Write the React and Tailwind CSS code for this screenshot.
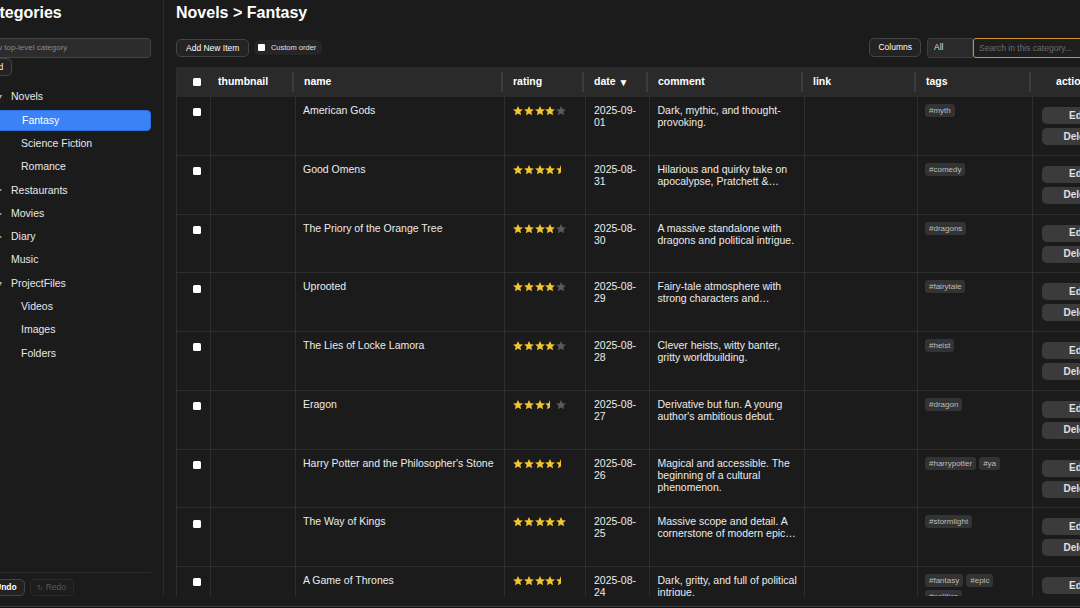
import React from "react";

const P = "M12 2l2.94 6.26 6.86.74-5.13 4.62 1.45 6.76L12 16.9l-6.12 3.48 1.45-6.76L2.2 9l6.86-.74z";

function Star({ type }) {
  return (
    <svg width="10" height="10" viewBox="2 2 20 20" className="mr-[0.8px] shrink-0">
      {type === "full" && <path d={P} fill="#f4c430" />}
      {type === "empty" && <path d={P} fill="#5a5a5a" />}
      {type === "half" && (
        <svg x="0" y="0" width="12" height="24">
          <path d={P} fill="#f4c430" />
        </svg>
      )}
    </svg>
  );
}

function Stars({ value }) {
  const items = [];
  for (let i = 1; i <= 5; i++) {
    if (value >= i) items.push("full");
    else if (value >= i - 0.5) items.push("half");
    else items.push("empty");
  }
  return (
    <div className="flex">
      {items.map((t, i) => (
        <Star key={i} type={t} />
      ))}
    </div>
  );
}

const rows = [
  { name: "American Gods", rating: 4, date: "2025-09-01", comment: "Dark, mythic, and thought-provoking.", tags: ["#myth"] },
  { name: "Good Omens", rating: 4.5, date: "2025-08-31", comment: "Hilarious and quirky take on apocalypse, Pratchett &…", tags: ["#comedy"] },
  { name: "The Priory of the Orange Tree", rating: 4, date: "2025-08-30", comment: "A massive standalone with dragons and political intrigue.", tags: ["#dragons"] },
  { name: "Uprooted", rating: 4, date: "2025-08-29", comment: "Fairy-tale atmosphere with strong characters and…", tags: ["#fairytale"] },
  { name: "The Lies of Locke Lamora", rating: 4, date: "2025-08-28", comment: "Clever heists, witty banter, gritty worldbuilding.", tags: ["#heist"] },
  { name: "Eragon", rating: 3.5, date: "2025-08-27", comment: "Derivative but fun. A young author's ambitious debut.", tags: ["#dragon"] },
  { name: "Harry Potter and the Philosopher's Stone", rating: 4.5, date: "2025-08-26", comment: "Magical and accessible. The beginning of a cultural phenomenon.", tags: ["#harrypotter", "#ya"] },
  { name: "The Way of Kings", rating: 5, date: "2025-08-25", comment: "Massive scope and detail. A cornerstone of modern epic…", tags: ["#stormlight"] },
  { name: "A Game of Thrones", rating: 4.5, date: "2025-08-24", comment: "Dark, gritty, and full of political intrigue.", tags: ["#fantasy", "#epic", "#politics"] },
];

const tree = [
  { label: "Novels", arrow: "▾", depth: 0 },
  { label: "Fantasy", depth: 1, selected: true },
  { label: "Science Fiction", depth: 1 },
  { label: "Romance", depth: 1 },
  { label: "Restaurants", arrow: "▸", depth: 0 },
  { label: "Movies", arrow: "▸", depth: 0 },
  { label: "Diary", arrow: "▸", depth: 0 },
  { label: "Music", depth: 0 },
  { label: "ProjectFiles", arrow: "▾", depth: 0 },
  { label: "Videos", depth: 1 },
  { label: "Images", depth: 1 },
  { label: "Folders", depth: 1 },
];

function Sep() {
  return <span className="absolute right-[2.5px] top-[5px] h-[20px] w-[1.5px] bg-[#3d3d3d]" />;
}

function Box() {
  return <span className="block w-[8px] h-[8px] bg-white rounded-[1.5px]" />;
}

export default function App() {
  return (
    <div className="w-[1080px] h-[608px] overflow-hidden bg-[#1b1b1b] text-[#e8e8e8] font-['Liberation_Sans',Arial,sans-serif] flex flex-col">
      <div className="flex h-[596px] shrink-0">
        <aside className="w-[197px] -ml-[33px] shrink-0 h-full border-r border-[#2c2c2c] px-[12px] pt-[3px] flex flex-col">
          <h1 className="text-[16px] leading-[20px] font-bold text-white whitespace-nowrap">Categories</h1>
          <input
            placeholder="New top-level category"
            className="mt-[14.5px] h-[20px] w-full shrink-0 rounded-[4px] border border-[#444] bg-[#2c2c2c] pl-[6px] text-[8px] text-white placeholder:text-[#8a8a8a] outline-none"
          />
          <button className="self-start mt-[0.6px] h-[17.7px] px-[8px] rounded-[5px] border border-[#444] bg-[#222] text-[8.5px] font-medium text-white leading-none">
            Add
          </button>
          <nav className="mt-[10.75px] flex-1 min-h-0 flex flex-col gap-[1.8px]">
            {tree.map((t) => (
              <div
                key={t.label}
                className={
                  "flex items-center h-[21.5px] shrink-0 rounded-[4px] text-[10.5px] " +
                  (t.depth === 1 ? "pl-[25px] " : "pl-[15px] ") +
                  (t.selected ? "bg-[#3b82f6] border border-[#2a6fdc] text-white" : "text-[#e8e8e8]")
                }
              >
                <span className="w-[12px] shrink-0 text-center text-[8px] text-[#aaa]">{t.arrow || ""}</span>
                <span className="ml-[5px] whitespace-nowrap">{t.label}</span>
              </div>
            ))}
          </nav>
          <div className="border-t border-[#2c2c2c] pt-[5.5px] flex gap-[5px] shrink-0">
            <button className="h-[17.5px] pl-[5px] pr-[7px] rounded-[5px] border border-[#444] bg-[#222] text-[8.5px] font-semibold text-white flex items-center gap-[3px] leading-none">
              <span className="text-[8px]">↺</span>Undo
            </button>
            <button className="h-[17.5px] pl-[6px] pr-[7px] rounded-[5px] border border-[#2a2a2a] bg-[#1d1d1d] text-[8.5px] text-[#585858] flex items-center gap-[3px] leading-none">
              <span className="text-[7px]">↻</span>Redo
            </button>
          </div>
        </aside>

        <main className="flex-1 min-w-0 overflow-hidden pl-[12px] pt-[3px]">
          <div className="w-[949px] h-full flex flex-col">
            <h2 className="text-[16px] leading-[20px] font-bold text-white whitespace-nowrap">Novels &gt; Fantasy</h2>
            <div className="mt-[14.5px] h-[20.5px] flex items-center justify-between shrink-0">
              <div className="flex items-center gap-[5px]">
                <button className="h-[18.5px] px-[9px] rounded-[5px] border border-[#444] bg-[#232323] text-[8.5px] font-medium text-white leading-none">
                  Add New Item
                </button>
                <div className="h-[14.7px] pl-[3.5px] pr-[6px] rounded-[6px] bg-[#262626] flex items-center gap-[6px]">
                  <span className="block w-[7px] h-[7px] bg-white rounded-[1px]" />
                  <span className="text-[7.5px] text-[#e0e0e0] leading-none">Custom order</span>
                </div>
              </div>
              <div className="flex items-center">
                <button className="h-[18.5px] px-[8px] rounded-[5px] border border-[#444] bg-[#232323] text-[8.5px] font-medium text-white leading-none mr-[6px]">
                  Columns
                </button>
                <div className="h-[20.3px] w-[46px] rounded-l-[3px] border border-[#3c3c3c] bg-[#2a2a2a] pl-[6px] flex items-center text-[8.5px] text-[#ddd]">
                  All
                </div>
                <input
                  placeholder="Search in this category..."
                  className="h-[20.3px] w-[152px] rounded-[3px] border-[1.5px] border-[#c9962a] bg-[#1e1e1e] pl-[5px] text-[8.5px] text-white placeholder:text-[#6b6b6b] outline-none"
                />
              </div>
            </div>

            <div className="mt-[9px] flex-1 min-h-0 overflow-hidden border-l border-[#2e2e2e]">
              <div className="flex h-[30px] bg-[#2a2a2a] text-[10.5px] font-bold text-white">
                <div className="w-[34px] shrink-0 pl-[16px] flex items-center"><Box /></div>
                <div className="w-[85px] shrink-0 relative px-[7px] flex items-center">thumbnail<Sep /></div>
                <div className="w-[209px] shrink-0 relative px-[8px] flex items-center">name<Sep /></div>
                <div className="w-[81px] shrink-0 relative px-[8px] flex items-center">rating<Sep /></div>
                <div className="w-[64px] shrink-0 relative px-[8px] flex items-center whitespace-nowrap">date <span className="ml-[3px] text-[10px]">▼</span><Sep /></div>
                <div className="w-[155px] shrink-0 relative px-[8px] flex items-center">comment<Sep /></div>
                <div className="w-[113px] shrink-0 relative px-[8px] flex items-center">link<Sep /></div>
                <div className="w-[115px] shrink-0 relative px-[8px] flex items-center">tags<Sep /></div>
                <div className="w-[93px] shrink-0 flex items-center justify-center pr-[10px]">actions</div>
              </div>
              {rows.map((r) => (
                <div key={r.name} className="flex h-[58.75px] border-b border-[#2e2e2e] text-[10.5px] leading-[12px] text-[#ececec]">
                  <div className="w-[34px] shrink-0 border-r border-[#2e2e2e] pl-[16px] pt-[11.3px]"><Box /></div>
                  <div className="w-[85px] shrink-0 border-r border-[#2e2e2e]" />
                  <div className="w-[209px] shrink-0 border-r border-[#2e2e2e] px-[7px] pt-[7px] whitespace-nowrap overflow-hidden">{r.name}</div>
                  <div className="w-[81px] shrink-0 border-r border-[#2e2e2e] pl-[8px] pt-[9px]"><Stars value={r.rating} /></div>
                  <div className="w-[64px] shrink-0 border-r border-[#2e2e2e] px-[8px] pt-[7px]">{r.date}</div>
                  <div className="w-[155px] shrink-0 border-r border-[#2e2e2e] pl-[7.5px] pr-[2px] pt-[7px]">{r.comment}</div>
                  <div className="w-[113px] shrink-0 border-r border-[#2e2e2e]" />
                  <div className="w-[115px] shrink-0 border-r border-[#2e2e2e] px-[7px] pt-[7px] flex flex-wrap content-start gap-[3px]">
                    {r.tags.map((t) => (
                      <span key={t} className="h-[13px] px-[4px] rounded-[3px] bg-[#333] text-[8px] leading-[13px] text-[#bdbdbd]">{t}</span>
                    ))}
                  </div>
                  <div className="w-[93px] shrink-0 pl-[9px] pt-[10px] flex flex-col gap-[4px]">
                    <button className="h-[17px] w-[73px] rounded-[5px] bg-[#3b3b3b] text-[10px] font-semibold text-[#e0e0e0] leading-none">Edit</button>
                    <button className="h-[17px] w-[73px] rounded-[5px] bg-[#3b3b3b] text-[10px] font-semibold text-[#e0e0e0] leading-none">Delete</button>
                  </div>
                </div>
              ))}
            </div>
          </div>
        </main>
      </div>
      <div className="h-[10px] shrink-0" />
      <div className="h-[1px] shrink-0 bg-[#3a3a3a]" />
      <div className="flex-1 bg-[#121212]" />
    </div>
  );
}
